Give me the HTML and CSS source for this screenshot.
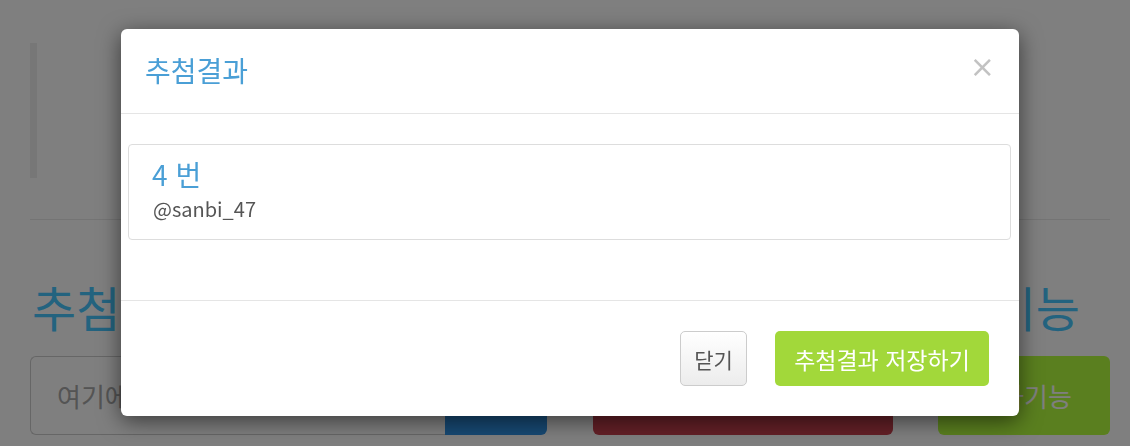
FILE: index.html
```html
<!DOCTYPE html>
<html lang="ko">
<head>
<meta charset="utf-8">
<title>추첨결과</title>
<link rel="stylesheet" href="styles.css">
</head>
<body>
<div class="page">
  <blockquote class="intro"></blockquote>
  <hr class="divider">
  <div class="title-row">
    <h1 class="big-title">추첨하기</h1>
    <h1 class="big-title">추가기능</h1>
  </div>
  <div class="controls">
    <div class="input-group">
      <input class="text-input" type="text" placeholder="여기에 입력하세요">
      <button class="btn-blue" type="button">추가</button>
    </div>
    <button class="btn-red" type="button">추첨하기</button>
    <button class="btn-green-bg" type="button">추가기능</button>
  </div>
</div>

<div class="backdrop"></div>

<div class="modal">
  <div class="modal-header">
    <h4 class="modal-title">추첨결과</h4>
    <button class="close" type="button" aria-label="닫기">&times;</button>
  </div>
  <div class="modal-body">
    <div class="result-item">
      <h4 class="result-num">4 번</h4>
      <p class="result-user">@sanbi_47</p>
    </div>
  </div>
  <div class="modal-footer">
    <button class="btn-default" type="button">닫기</button>
    <button class="btn-save" type="button">추첨결과 저장하기</button>
  </div>
</div>
</body>
</html>
```

FILE: styles.css
```css
* { box-sizing: border-box; }

html, body {
  margin: 0;
  padding: 0;
  width: 1130px;
  height: 446px;
  overflow: hidden;
  background: #ffffff;
  font-family: "Noto Sans CJK KR", "Noto Sans", sans-serif;
}

.page {
  padding: 43px 20px 0 30px;
}

.intro {
  margin: 0;
  height: 135px;
  border-left: 7px solid #eeeeee;
}

.divider {
  margin: 41px 0 0 0;
  border: 0;
  border-top: 1px solid #e8e8e8;
}

.title-row {
  display: flex;
  justify-content: space-between;
  margin-top: 56px;
  height: 80px;
}

.big-title {
  margin: 0;
  font-size: 48px;
  font-weight: 400;
  line-height: 60px;
  color: #46c6ff;
  padding-left: 2px;
  padding-right: 30px;
}

.controls {
  display: flex;
  align-items: stretch;
  height: 79px;
}

.input-group {
  display: flex;
  width: 517px;
}

.text-input {
  flex: 1;
  border: 1px solid #cccccc;
  border-right: 0;
  border-radius: 6px 0 0 6px;
  padding: 0 26px;
  font-family: inherit;
  font-size: 26px;
  color: #555555;
  background: #ffffff;
}
.text-input::placeholder { color: #a8a8a8; }

.btn-blue {
  width: 102px;
  border: 0;
  border-radius: 0 6px 6px 0;
  background: #2e92e6;
  color: #ffffff;
  font-family: inherit;
  font-size: 26px;
}

.btn-red {
  margin-left: 46px;
  width: 300px;
  border: 0;
  border-radius: 6px;
  background: #c8414e;
  color: #ffffff;
  font-family: inherit;
  font-size: 26px;
}

.btn-green-bg {
  margin-left: 45px;
  width: 172px;
  border: 0;
  border-radius: 6px;
  background: #b4ff3e;
  color: #ffffff;
  font-family: inherit;
  font-size: 26px;
}

.backdrop {
  position: fixed;
  inset: 0;
  background: rgba(0, 0, 0, 0.5);
}

.modal {
  position: absolute;
  left: 121px;
  top: 29px;
  width: 898px;
  height: 387px;
  background: #ffffff;
  border-radius: 6px;
  box-shadow: 0 5px 22px rgba(0, 0, 0, 0.55);
  display: flex;
  flex-direction: column;
}

.modal-header {
  height: 85px;
  border-bottom: 1px solid #e5e5e5;
  display: flex;
  align-items: center;
  justify-content: space-between;
  padding: 0 24px 2px 24px;
}

.modal-title {
  margin: 0;
  font-size: 28px;
  font-weight: 400;
  line-height: 34px;
  color: #4a9fd6;
}

.close {
  border: 0;
  background: transparent;
  padding: 0;
  font-family: "DejaVu Sans", sans-serif;
  font-size: 30px;
  font-weight: 400;
  line-height: 30px;
  color: #c2c2c2;
  margin-top: -6px;
}

.modal-body {
  height: 187px;
  padding: 30px 8px 0 7px;
  border-bottom: 1px solid #e5e5e5;
}

.result-item {
  height: 96px;
  border: 1px solid #dddddd;
  border-radius: 4px;
  padding: 11px 23px 0 23px;
}

.result-num {
  margin: 0;
  font-size: 28px;
  font-weight: 400;
  line-height: 36px;
  color: #4a9fd6;
}

.result-user {
  margin: 3px 0 0 1px;
  font-size: 20px;
  line-height: 28px;
  color: #555555;
}

.modal-footer {
  flex: 1;
  display: flex;
  justify-content: flex-end;
  align-items: flex-start;
  gap: 28px;
  padding: 30px 30px 0 0;
}

.btn-default {
  height: 55px;
  width: 67px;
  border: 1px solid #cccccc;
  border-radius: 5px;
  background: linear-gradient(#ffffff, #ececec);
  color: #555555;
  font-family: inherit;
  font-size: 21px;
  padding: 0;
}

.btn-save {
  height: 55px;
  width: 214px;
  border: 0;
  border-radius: 5px;
  background: #a2d83a;
  color: #ffffff;
  font-family: inherit;
  font-size: 23px;
  padding: 0;
}
```
